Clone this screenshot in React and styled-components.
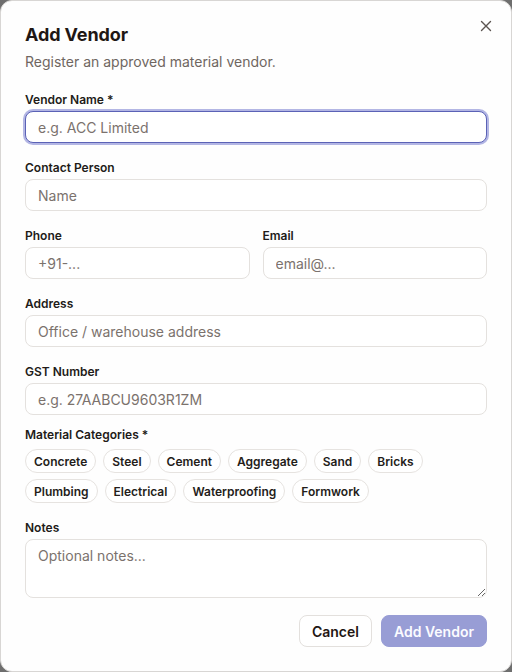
import React, { useState } from 'react';
import styled, { createGlobalStyle } from 'styled-components';

const GlobalStyle = createGlobalStyle`
  html, body {
    margin: 0;
    padding: 0;
    background: #6e6e6e;
  }
  body {
    font-family: Inter, "Noto Sans", "Liberation Sans", sans-serif;
    -webkit-font-smoothing: antialiased;
  }
  * { box-sizing: border-box; }
`;

const Dialog = styled.div`
  position: relative;
  width: 512px;
  height: 672px;
  background: #fefefe;
  border: 1px solid #d8d6d4;
  border-radius: 12px;
  padding: 22px 24px 24px 24px;
  display: flex;
  flex-direction: column;
`;

const CloseButton = styled.button`
  position: absolute;
  top: 16px;
  right: 16px;
  width: 18px;
  height: 18px;
  padding: 0;
  border: none;
  background: none;
  color: #5b5450;
  display: flex;
  align-items: center;
  justify-content: center;
  cursor: pointer;
`;

const Title = styled.h2`
  margin: 0;
  font-size: 18px;
  font-weight: 700;
  line-height: 24px;
  color: #1f1714;
  letter-spacing: -0.1px;
`;

const Subtitle = styled.p`
  margin: 4px 0 0 0;
  font-size: 14px;
  line-height: 22px;
  color: #6f6661;
`;

const Form = styled.form`
  margin-top: 19px;
  display: flex;
  flex-direction: column;
  gap: 17px;
`;

const Row = styled.div`
  display: grid;
  grid-template-columns: 1fr 1fr;
  gap: 13px;
`;

const Field = styled.div`
  display: flex;
  flex-direction: column;
  gap: ${p => (p.$tight ? '6px' : '3px')};
  margin-top: ${p => (p.$pull ? '-5px' : '0')};
`;

const Label = styled.label`
  font-size: 12px;
  font-weight: 600;
  line-height: 16px;
  color: #221b18;
`;

const Input = styled.input`
  height: 32px;
  width: 100%;
  border: 1px solid ${p => (p.$focused ? '#5b62b6' : '#e4e1de')};
  border-radius: 8px;
  padding: 0 12px;
  font: inherit;
  font-size: 14px;
  color: #221b18;
  background: #fff;
  outline: none;
  box-shadow: ${p => (p.$focused ? '0 0 0 2px #b3b6e4' : 'none')};
  &::placeholder { color: #7b726d; }
`;

const TextArea = styled.textarea`
  height: 59px;
  width: 100%;
  border: 1px solid #e4e1de;
  border-radius: 8px;
  padding: 6px 12px;
  font: inherit;
  font-size: 14px;
  line-height: 20px;
  color: #221b18;
  background: #fff;
  outline: none;
  resize: vertical;
  &::placeholder { color: #7b726d; }
`;

const Chips = styled.div`
  display: flex;
  flex-wrap: wrap;
  gap: 6px 7px;
`;

const Chip = styled.button`
  height: 24px;
  padding: 0 8px;
  border: 1px solid #e6e3e0;
  border-radius: 12px;
  background: ${p => (p.$on ? '#eceefa' : '#fff')};
  font: inherit;
  font-size: 12px;
  font-weight: 600;
  color: #241d1a;
  cursor: pointer;
`;

const Footer = styled.div`
  margin-top: 17px;
  display: flex;
  justify-content: flex-end;
  gap: 9px;
`;

const Button = styled.button`
  height: 32px;
  padding: 0 12px;
  border-radius: 8px;
  font: inherit;
  font-size: 14px;
  font-weight: 600;
  border: 1px solid ${p => (p.$primary ? '#989dd5' : '#e3e0dd')};
  background: ${p => (p.$primary ? '#989dd5' : '#fff')};
  color: ${p => (p.$primary ? '#fbfbff' : '#1f1714')};
  cursor: pointer;
`;

const categories = [
  'Concrete', 'Steel', 'Cement', 'Aggregate', 'Sand', 'Bricks',
  'Plumbing', 'Electrical', 'Waterproofing', 'Formwork',
];

export default function App() {
  const [picked, setPicked] = useState([]);
  const toggle = c =>
    setPicked(p => (p.includes(c) ? p.filter(x => x !== c) : [...p, c]));

  return (
    <>
      <GlobalStyle />
      <Dialog>
        <CloseButton aria-label="Close">
          <svg width="12" height="12" viewBox="0 0 12 12" fill="none" stroke="currentColor" strokeWidth="1.4" strokeLinecap="round">
            <path d="M1.5 1.5l9 9M10.5 1.5l-9 9" />
          </svg>
        </CloseButton>
        <Title>Add Vendor</Title>
        <Subtitle>Register an approved material vendor.</Subtitle>
        <Form onSubmit={e => e.preventDefault()}>
          <Field>
            <Label>Vendor Name *</Label>
            <Input $focused placeholder="e.g. ACC Limited" />
          </Field>
          <Field>
            <Label>Contact Person</Label>
            <Input placeholder="Name" />
          </Field>
          <Row>
            <Field>
              <Label>Phone</Label>
              <Input placeholder="+91-..." />
            </Field>
            <Field>
              <Label>Email</Label>
              <Input placeholder="email@..." />
            </Field>
          </Row>
          <Field>
            <Label>Address</Label>
            <Input placeholder="Office / warehouse address" />
          </Field>
          <Field>
            <Label>GST Number</Label>
            <Input placeholder="e.g. 27AABCU9603R1ZM" />
          </Field>
          <Field $tight $pull>
            <Label>Material Categories *</Label>
            <Chips>
              {categories.map(c => (
                <Chip type="button" key={c} $on={picked.includes(c)} onClick={() => toggle(c)}>
                  {c}
                </Chip>
              ))}
            </Chips>
          </Field>
          <Field>
            <Label>Notes</Label>
            <TextArea placeholder="Optional notes..." />
          </Field>
        </Form>
        <Footer>
          <Button type="button">Cancel</Button>
          <Button type="button" $primary>Add Vendor</Button>
        </Footer>
      </Dialog>
    </>
  );
}
